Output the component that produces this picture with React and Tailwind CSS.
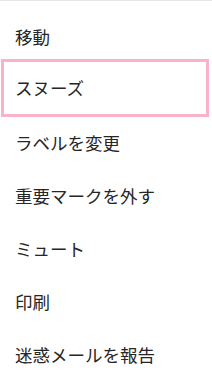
import React from 'react';

const items = ['ラベルを変更', '重要マークを外す', 'ミュート', '印刷', '迷惑メールを報告'];

export default function App() {
  return (
    <div
      className="w-[212px] h-[388px] bg-white border-t border-[#e6e6e6] pt-[14px] overflow-hidden text-[17.5px] text-[#262626]"
      style={{ fontFamily: '"Noto Sans CJK JP", "Noto Sans", sans-serif' }}
    >
      <div className="h-[44px] flex items-center pl-[15px]">移動</div>
      <div className="ml-[1px] w-[208px] h-[58px] border-[3px] border-[#f9b3c9] flex items-center pl-[11px]">
        スヌーズ
      </div>
      {items.map((label) => (
        <div key={label} className="h-[53px] flex items-center pl-[15px]">
          {label}
        </div>
      ))}
    </div>
  );
}
